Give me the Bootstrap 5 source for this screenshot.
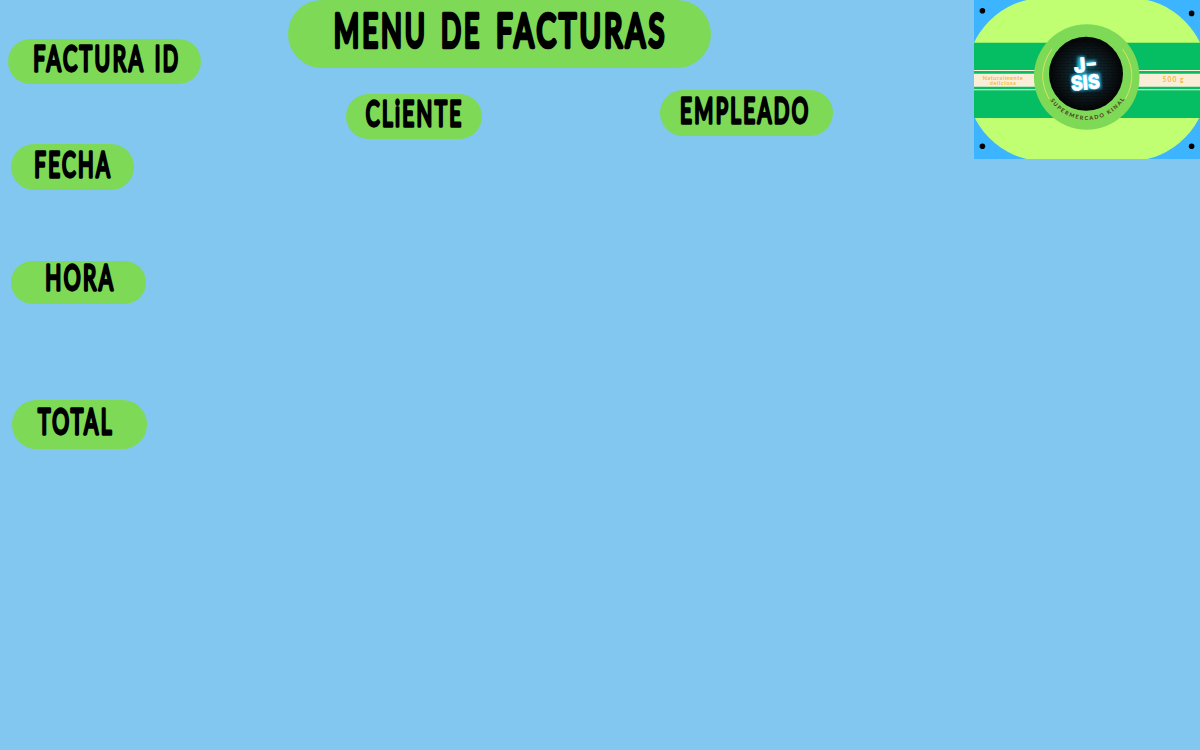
<!DOCTYPE html>
<html lang="es">
<head>
<meta charset="utf-8">
<meta name="viewport" content="width=device-width, initial-scale=1">
<title>Menu de facturas</title>
<link href="https://cdn.jsdelivr.net/npm/bootstrap@5.3.0/dist/css/bootstrap.min.css" rel="stylesheet">
<style>
body{background:#81c7f0;height:750px;overflow:hidden;font-family:Lato,"Liberation Sans",sans-serif}
.side-labels{width:287.5px;padding:38.5px 0 0 8px}
.main-labels{width:686.5px}
.pill{background:#7ed957;border-radius:50rem;flex:none}
.pill svg,.brand svg{display:block;overflow:visible}
.brand svg{overflow:hidden}
.pill text{font-family:Lato,sans-serif;font-weight:400;font-size:34.5px;letter-spacing:4px;fill:#000;stroke:#000;stroke-width:3.3px;stroke-linejoin:round;stroke-linecap:round}
.p-title{width:423.5px;height:68px;border-radius:34px}
.p-title text{font-size:46.5px;letter-spacing:5px;stroke-width:4.5px}
.p-id{width:193.4px;height:45px}
.p-fecha{width:123.2px;height:46px;margin:60.5px 0 0 2.6px}
.p-hora{width:135px;height:43.5px;margin:70.5px 0 0 2.6px}
.p-total{width:135px;height:49px;margin:96px 0 0 4px}
.people{padding:22px 0 0 58px;gap:178px}
.p-cliente{width:136px;height:45px;margin-top:4px}
.p-empleado{width:173px;height:46px}
.brand{width:226px;height:159px}
</style>
</head>
<body>
<div class="d-flex align-items-start">
  <aside class="side-labels d-flex flex-column align-items-start">
    <div class="pill p-id"><svg width="193" height="45"><text x="25.300" y="31.500" textLength="112" lengthAdjust="spacingAndGlyphs">FACTURA</text><text x="146.700" y="31.500" textLength="25.500" lengthAdjust="spacingAndGlyphs">ID</text></svg></div>
    <div class="pill p-fecha"><svg width="123" height="46"><text x="23.300" y="33" textLength="78" lengthAdjust="spacingAndGlyphs">FECHA</text></svg></div>
    <div class="pill p-hora"><svg width="135" height="43.5"><text x="34.300" y="29.200" textLength="70" lengthAdjust="spacingAndGlyphs">HORA</text></svg></div>
    <div class="pill p-total"><svg width="135" height="49"><text x="26" y="33.500" textLength="76" lengthAdjust="spacingAndGlyphs">TOTAL</text></svg></div>
  </aside>
  <main class="main-labels">
    <h1 class="pill p-title m-0"><svg width="423.5" height="68"><text x="45.800" y="46.800" textLength="94" lengthAdjust="spacingAndGlyphs">MENU</text><text x="153" y="46.800" textLength="41" lengthAdjust="spacingAndGlyphs">DE</text><text x="208" y="46.800" textLength="171.500" lengthAdjust="spacingAndGlyphs">FACTURAS</text></svg></h1>
    <div class="people d-flex align-items-start">
      <div class="pill p-cliente"><svg width="136" height="45"><text x="19.700" y="31.500" textLength="98" lengthAdjust="spacingAndGlyphs">CLiENTE</text></svg></div>
      <div class="pill p-empleado"><svg width="173" height="46"><text x="20" y="32.500" textLength="130.500" lengthAdjust="spacingAndGlyphs">EMPLEADO</text></svg></div>
    </div>
  </main>
  <div class="brand">
    <svg width="226" height="159" viewBox="0 0 226 159">
      <defs>
        <radialGradient id="wall"><stop offset="0" stop-color="#14535f"/><stop offset=".4" stop-color="#0d262d"/><stop offset=".75" stop-color="#0b1114"/><stop offset="1" stop-color="#030506"/></radialGradient>
        <pattern id="bricks" width="8" height="6" patternUnits="userSpaceOnUse"><path d="M0 .5H8M0 3.5H8M2 .5V3.5M6 3.5V6" stroke="#000" stroke-opacity=".3" stroke-width=".7" fill="none"/></pattern>
        <filter id="glow" x="-50%" y="-50%" width="200%" height="200%"><feGaussianBlur stdDeviation="1.6"/></filter>
        <path id="ring" d="M69 76A44 44 0 0 0 157 76"/>
      </defs>
      <path fill="#3cb4ff" d="M0 0H226V159H0z"/>
      <rect x="-8" y="-2" width="242" height="163" rx="78" ry="80" fill="#c1ff72"/>
      <path fill="#05bd62" d="M0 42.700H226V118H0z"/>
      <path fill="#fbeed9" d="M0 73.800H226V86.800H0zM0 70H226V71H0zM0 89.200H226V90.200H0z"/>
      <circle cx="112.700" cy="77" r="52.800" fill="#7ed957"/>
      <circle cx="112" cy="73.800" r="37" fill="url(#wall)"/>
      <circle cx="112" cy="73.800" r="37" fill="url(#bricks)"/>
      <path d="M78 49Q61 73 75 99M148.500 49Q165.500 73 151.500 99" fill="none" stroke="#dce066" stroke-width="1"/>
      <g transform="rotate(-5 112 74)" font-family="Inter,sans-serif" font-weight="800" font-size="20">
        <g fill="#35bfe8" stroke="#22b3df" stroke-width="2" filter="url(#glow)" aria-hidden="true"><path d="M106 57h5v15h-7zM114 62h8v3h-8zM98 75h27v14H98z"/></g>
        <g fill="#fff" stroke="#fff" stroke-width=".6"><text x="100.500" y="72" textLength="12" lengthAdjust="spacingAndGlyphs">J</text><text x="112" y="70.500" textLength="12" lengthAdjust="spacingAndGlyphs">-</text><text x="96" y="89.500" textLength="29" lengthAdjust="spacingAndGlyphs">SIS</text></g>
      </g>
      <text font-family="Lato,sans-serif" font-weight="700" font-size="5.500" fill="#4b301c"><textPath href="#ring" startOffset="25.500" textLength="88">SUPERMERCADO KINAL</textPath></text>
      <g font-family="Lato,sans-serif" fill="#f6b63c"><text x="8.700" y="79.600" font-size="5.500" font-weight="700" textLength="40">Naturalmente</text><text x="15.700" y="85" font-size="5.500" font-weight="700" textLength="26">deliciosa</text><text x="188.500" y="82.200" font-size="6.500" font-weight="700" textLength="21">500 g</text></g>
      <g><circle cx="8.400" cy="10.700" r="2.800"/><circle cx="217.600" cy="13.400" r="2.800"/><circle cx="8.400" cy="146.200" r="2.800"/><circle cx="217.600" cy="146.200" r="2.800"/></g>
    </svg>
  </div>
</div>
<script src="https://cdn.jsdelivr.net/npm/bootstrap@5.3.0/dist/js/bootstrap.bundle.min.js"></script>
</body>
</html>
